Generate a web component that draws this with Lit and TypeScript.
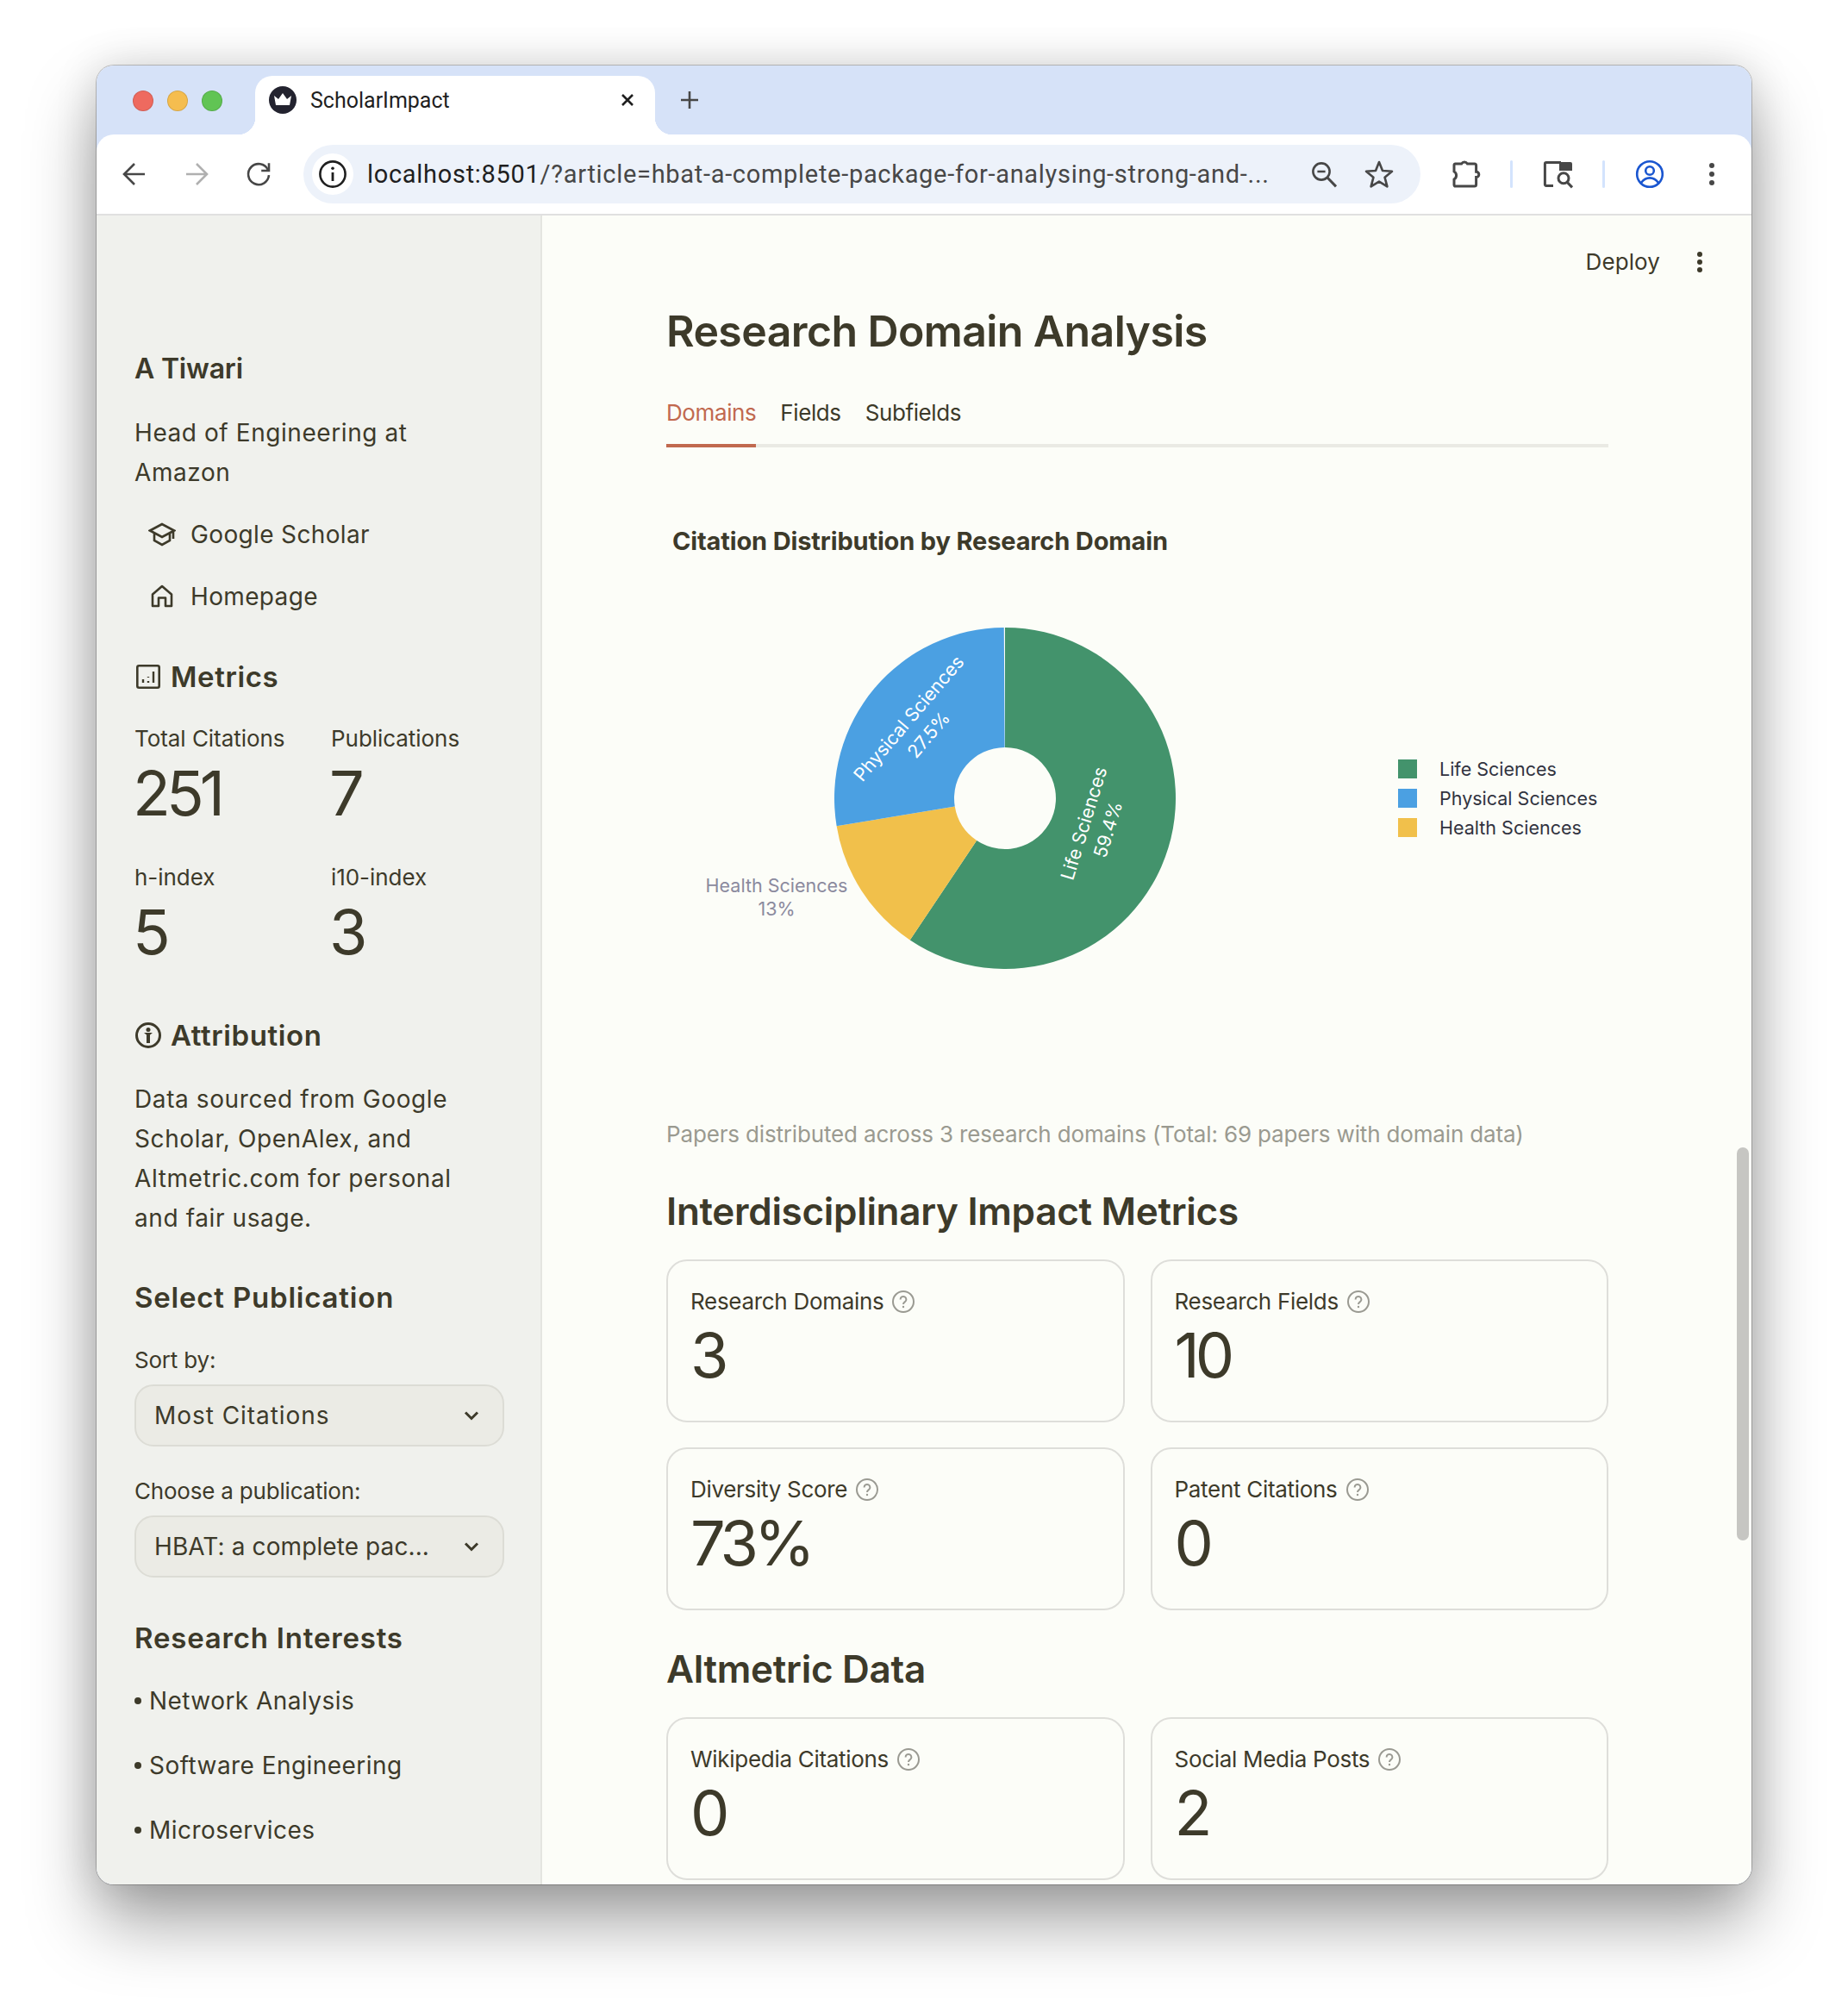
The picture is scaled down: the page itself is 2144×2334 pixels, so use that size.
import { LitElement, html, css, svg } from 'lit';
import { customElement } from 'lit/decorators.js';

const slices = [
  { name: 'Life Sciences', pct: 59.4, color: '#43936c' },
  { name: 'Physical Sciences', pct: 27.5, color: '#4ba0e2' },
  { name: 'Health Sciences', pct: 13, color: '#f1c04b' },
];
// plotly keeps the legend order but draws the pie clockwise from the top in this order
const pieOrder = [0, 2, 1];

const CX = 393;
const CY = 278;
const R = 198;
const HOLE = 59;

function point(radius: number, deg: number) {
  const a = ((deg - 90) * Math.PI) / 180;
  return `${(CX + radius * Math.cos(a)).toFixed(2)} ${(CY + radius * Math.sin(a)).toFixed(2)}`;
}

function wedge(from: number, to: number) {
  const large = to - from > 180 ? 1 : 0;
  return `M${point(HOLE, from)} L${point(R, from)} A${R} ${R} 0 ${large} 1 ${point(R, to)} L${point(HOLE, to)} A${HOLE} ${HOLE} 0 ${large} 0 ${point(HOLE, from)} Z`;
}

const help = html`<svg class="help" viewBox="0 0 26 26"><circle cx="13" cy="13" r="12" fill="none" stroke="#9a9a92" stroke-width="2"/><path d="M9.6 10.4a3.4 3.4 0 1 1 5.3 2.8c-1.2.8-1.9 1.4-1.9 2.8" fill="none" stroke="#9a9a92" stroke-width="2"/><circle cx="13" cy="19" r="1.2" fill="#9a9a92"/></svg>`;

const chevron = html`<svg class="chev" viewBox="0 0 24 24"><path d="M5 8.5l7 7 7-7" fill="none" stroke="#3d3a2a" stroke-width="3"/></svg>`;

@customElement('app-root')
export class AppRoot extends LitElement {
  static styles = css`
    :host {
      display: block;
      box-sizing: border-box;
      height: 2334px;
      padding: 76px 112px 148px;
      background: #fff;
      font-family: Inter, 'Liberation Sans', sans-serif;
      color: #3d3a2a;
    }
    * { box-sizing: border-box; }
    .window {
      position: relative;
      height: 2110px;
      border-radius: 20px;
      overflow: hidden;
      display: flex;
      flex-direction: column;
      background: #d6e2f8;
    }
    .shadow {
      height: 2110px;
      border-radius: 20px;
      box-shadow: 0 0 0 1px rgba(0,0,0,.22), 0 44px 80px rgba(0,0,0,.36), 0 0 50px rgba(0,0,0,.14);
    }
    .tabstrip { height: 80px; display: flex; align-items: flex-end; flex: none; }
    .lights { display: flex; gap: 16px; width: 184px; padding: 0 0 27px 42px; }
    .light { width: 24px; height: 24px; border-radius: 50%; border: 1px solid rgba(0,0,0,.12); }
    .red { background: #ee6a5f; }
    .amber { background: #f5bd4f; }
    .green { background: #61c454; }
    .tab {
      position: relative;
      width: 464px;
      height: 68px;
      background: #fff;
      border-radius: 20px 20px 0 0;
      display: flex;
      align-items: center;
      padding: 0 20px 12px 16px;
      font-family: Roboto, sans-serif;
      font-size: 25px;
      color: #1f1f1f;
    }
    .tab::before, .tab::after {
      content: '';
      position: absolute;
      bottom: 0;
      width: 20px;
      height: 20px;
    }
    .tab::before { left: -20px; background: radial-gradient(circle at 0 0, #d6e2f8 20px, #fff 20.5px); }
    .tab::after { right: -20px; background: radial-gradient(circle at 100% 0, #d6e2f8 20px, #fff 20.5px); }
    .favicon { width: 32px; height: 32px; margin-right: 16px; flex: none; }
    .tab-title { flex: 1; }
    .tab-close { width: 24px; height: 24px; }
    .new-tab { width: 32px; height: 32px; margin: 0 0 24px 24px; }
    .toolbar {
      height: 94px;
      flex: none;
      background: #fff;
      border-radius: 20px 20px 0 0;
      border-bottom: 2px solid #e0e0e0;
      display: flex;
      align-items: center;
      padding: 0 0 0 20px;
    }
    .ic { width: 48px; height: 48px; flex: none; display: block; }
    .nav { display: flex; gap: 24px; margin-right: 28px; }
    .omni {
      width: 1296px;
      height: 68px;
      border-radius: 34px;
      background: #edf2fa;
      display: flex;
      align-items: center;
      padding: 0 24px 0 10px;
      gap: 16px;
      margin-right: 28px;
      flex: none;
    }
    .info { border-radius: 50%; background: #fff; }
    .url {
      flex: 1;
      font-family: Roboto, sans-serif;
      font-size: 29px;
      letter-spacing: .7px;
      color: #1f1f1f;
      white-space: nowrap;
      overflow: hidden;
    }
    .url span { color: #474747; }
    .sep { width: 3px; height: 32px; background: #d3e3fd; margin: 0 28px; border-radius: 2px; flex: none; }
    .menu { margin-left: 24px; }
    .body { flex: 1; display: flex; min-height: 0; }
    .sidebar {
      width: 517px;
      flex: none;
      background: #f0f1ed;
      border-right: 2px solid #e4e5e0;
      padding: 158px 42px 0 44px;
    }
    .name { font-size: 32px; line-height: 40px; font-weight: 600; letter-spacing: -.2px; }
    .role { margin-top: 31px; font-size: 28px; line-height: 46px; letter-spacing: .57px; }
    .link { display: flex; align-items: center; margin-top: 26px; padding-left: 16px; font-size: 28px; line-height: 46px; letter-spacing: .35px; gap: 17px; }
    .link svg { width: 32px; height: 32px; flex: none; }
    .side-h {
      display: flex;
      align-items: center;
      gap: 10px;
      font-size: 33px;
      line-height: 44px;
      font-weight: 600;
      letter-spacing: .6px;
    }
    .side-h svg { width: 32px; height: 32px; flex: none; }
    .metrics-h { margin-top: 48px; }
    .metric-grid { display: grid; grid-template-columns: 228px 228px; row-gap: 38px; margin-top: 32px; }
    .m-label { font-size: 26px; line-height: 36px; letter-spacing: -.05px; }
    .m-value { font-size: 72px; line-height: 84px; margin: 3px 0 0 -2px; letter-spacing: -5px; font-weight: 400; }
    .attr-h { margin-top: 56px; }
    .para { margin-top: 29px; font-size: 28px; line-height: 46px; letter-spacing: .6px; }
    .sec-h { font-size: 33px; line-height: 44px; font-weight: 600; letter-spacing: .8px; }
    .publ-h { margin-top: 47px; }
    .f-label { font-size: 26px; line-height: 36px; margin-top: 33px; letter-spacing: -.2px; }
    .f-label.second { margin-top: 34px; }
    .select {
      height: 72px;
      margin-top: 10px;
      border: 2px solid #dcdcd5;
      border-radius: 22px;
      background: #ebebe5;
      display: flex;
      align-items: center;
      justify-content: space-between;
      padding: 0 24px 0 21px;
      font-size: 28px;
      letter-spacing: .95px;
    }
    .select.tight { letter-spacing: .1px; }
    .chev { width: 24px; height: 24px; }
    .int-h { margin-top: 48px; }
    .ints { margin-top: 28px; display: flex; flex-direction: column; gap: 29px; font-size: 28px; line-height: 46px; letter-spacing: .45px; }
    .ints div { display: flex; align-items: center; gap: 9px; }
    .ints i { width: 8px; height: 8px; border-radius: 50%; background: #3d3a2a; }
    .main { position: relative; flex: 1; background: #fcfdf8; padding: 102px 0 0 144px; overflow: hidden; }
    .topbar { position: absolute; top: 36px; right: 45px; display: flex; align-items: center; gap: 0; font-size: 26px; line-height: 36px; letter-spacing: .1px; }
    .topbar svg { width: 32px; height: 32px; margin-left: 30px; margin-right: -1px; }
    .content { width: 1093px; }
    h1 { margin: 0; font-size: 50px; line-height: 64px; font-weight: 600; letter-spacing: -.6px; }
    .tabs { margin-top: 43px; height: 60px; border-bottom: 4px solid #eaeae4; display: flex; gap: 28px; font-size: 26px; line-height: 40px; letter-spacing: -.4px; }
    .tabs div { height: 60px; }
    .tabs .on { color: #c1694f; border-bottom: 4px solid #c1694f; }
    .chart-title { margin: 89px 0 0 7px; font-size: 29px; line-height: 40px; font-weight: 700; letter-spacing: -.15px; }
    .chart { display: block; width: 1093px; height: 650px; font-family: Inter, sans-serif; }
    .lab { font-size: 21.5px; fill: #fff; text-anchor: middle; dominant-baseline: central; }
    .lab.out { fill: #8b8a9e; }
    .leg { font-size: 21.5px; fill: #31333f; dominant-baseline: central; }
    .caption { font-size: 26px; line-height: 36px; color: #9a9a90; letter-spacing: -.16px; }
    h2 { margin: 43px 0 0; font-size: 44px; line-height: 56px; font-weight: 600; letter-spacing: -.3px; }
    .cards { display: grid; grid-template-columns: 1fr 1fr; column-gap: 30px; row-gap: 29px; margin-top: 28px; }
    .card { height: 189px; border: 2px solid #dededa; border-radius: 24px; padding: 29px 26px 0; }
    .c-label { display: flex; align-items: center; gap: 10px; font-size: 26px; line-height: 36px; letter-spacing: -.3px; }
    .help { width: 26px; height: 26px; }
    .c-value { font-size: 72px; line-height: 84px; margin-top: 2px; letter-spacing: -5px; }
    .alt-h { margin-top: 40px; }
    .alt { margin-top: 28px; }
    .scroll { position: absolute; top: 1255px; left: 1903px; width: 14px; height: 456px; border-radius: 7px; background: #c6c6c2; }
  `;

  private _slices() {
    let at = 0;
    return pieOrder.map((i) => {
      const s = slices[i];
      const from = at;
      at += s.pct * 3.6;
      return svg`<path d=${wedge(from, at)} fill=${s.color}/>`;
    });
  }

  private _browser() {
    return html`
      <div class="tabstrip">
        <div class="lights">
          <div class="light red"></div><div class="light amber"></div><div class="light green"></div>
        </div>
        <div class="tab">
          <svg class="favicon" viewBox="0 0 32 32"><circle cx="16" cy="16" r="16" fill="#23232f"/><path d="M6 11l5 4 5-7 5 7 5-4-2 11H8z" fill="#fff"/></svg>
          <span class="tab-title">ScholarImpact</span>
          <svg class="tab-close" viewBox="0 0 24 24"><path d="M6 6l12 12M18 6L6 18" stroke="#1f1f1f" stroke-width="2.6"/></svg>
        </div>
        <svg class="new-tab" viewBox="0 0 32 32"><path d="M16 6v20M6 16h20" stroke="#474747" stroke-width="2.6"/></svg>
      </div>
      <div class="toolbar">
        <div class="nav">
          <svg class="ic" viewBox="0 0 24 24"><path d="M18 12H6.5M12 6l-6 6 6 6" fill="none" stroke="#474747" stroke-width="1.3"/></svg>
          <svg class="ic" viewBox="0 0 24 24"><path d="M6 12h11.5M12 6l6 6-6 6" fill="none" stroke="#b0b0b0" stroke-width="1.3"/></svg>
          <svg class="ic" viewBox="0 0 24 24"><path d="M17.4 9.4a6 6 0 1 0 .6 3.2" fill="none" stroke="#474747" stroke-width="1.3"/><path d="M18 5.6v4.4h-4.4" fill="none" stroke="#474747" stroke-width="1.3"/></svg>
        </div>
        <div class="omni">
          <svg class="ic info" viewBox="0 0 24 24"><circle cx="12" cy="12" r="7.3" fill="none" stroke="#1f1f1f" stroke-width="1.3"/><path d="M12 11v5" stroke="#1f1f1f" stroke-width="1.4"/><circle cx="12" cy="8.6" r=".9" fill="#1f1f1f"/></svg>
          <div class="url">localhost:8501<span>/?article=hbat-a-complete-package-for-analysing-strong-and-...</span></div>
          <svg class="ic" viewBox="0 0 24 24"><circle cx="10.5" cy="10.5" r="4.8" fill="none" stroke="#474747" stroke-width="1.3"/><path d="M14 14l5 5.2" stroke="#474747" stroke-width="1.5"/><path d="M8.2 10.5h4.6" stroke="#474747" stroke-width="1.3"/></svg>
          <svg class="ic" viewBox="0 0 24 24"><path d="M12 5l2 5 5.5.4-4.2 3.5 1.4 5.3L12 16.3l-4.7 2.9 1.4-5.3-4.2-3.5L10 10z" fill="none" stroke="#474747" stroke-width="1.3" stroke-linejoin="round"/></svg>
        </div>
        <svg class="ic" viewBox="0 0 24 24"><path d="M6.2 6h3.6a2 2 0 0 1 3.4 0h4.1a1 1 0 0 1 1 1v3.6a1.6 1.6 0 0 1 0 3.2V18a1 1 0 0 1-1 1H6.2a.7.7 0 0 1-.7-.7V15a2.6 2.6 0 0 0 0-4.5V6.700a.7.7 0 0 1 .7-.7z" fill="none" stroke="#474747" stroke-width="1.5"/></svg>
        <div class="sep"></div>
        <svg class="ic" viewBox="0 0 24 24"><path d="M9.5 18.7H5.5a.8.8 0 0 1-.8-.8V6a.8.8 0 0 1 .8-.8H14" fill="none" stroke="#474747" stroke-width="1.5"/><path d="M13 5h6.500a1 1 0 0 1 1 1v4H13z" fill="#474747"/><circle cx="15.5" cy="14.4" r="3" fill="none" stroke="#474747" stroke-width="1.5"/><path d="M17.6 16.7l2.9 3" stroke="#474747" stroke-width="1.5"/></svg>
        <div class="sep"></div>
        <svg class="ic" viewBox="0 0 24 24"><circle cx="12" cy="12" r="7.4" fill="none" stroke="#1a56d0" stroke-width="1.3"/><circle cx="12" cy="10" r="2.4" fill="none" stroke="#1a56d0" stroke-width="1.3"/><path d="M7 17c1.5-2 3-2.8 5-2.8s3.5.8 5 2.8" fill="none" stroke="#1a56d0" stroke-width="1.3"/></svg>
        <svg class="ic menu" viewBox="0 0 24 24"><circle cx="12" cy="7" r="1.5" fill="#474747"/><circle cx="12" cy="12" r="1.5" fill="#474747"/><circle cx="12" cy="17" r="1.5" fill="#474747"/></svg>
      </div>
    `;
  }

  private _sidebar() {
    const metrics = [
      ['Total Citations', '251'],
      ['Publications', '7'],
      ['h-index', '5'],
      ['i10-index', '3'],
    ];
    return html`
      <aside class="sidebar">
        <div class="name">A Tiwari</div>
        <div class="role">Head of Engineering at<br />Amazon</div>
        <div class="link">
          <svg viewBox="0 0 32 32"><path d="M16 4L2 11.5 16 19l14-7.5zM7 15v8l9 5 9-5v-8M29 12v9" fill="none" stroke="#3d3a2a" stroke-width="2.6"/></svg>
          Google Scholar
        </div>
        <div class="link">
          <svg viewBox="0 0 32 32"><path d="M5 27V13.5L16 4l11 9.5V27h-7V17.5h-8V27z" fill="none" stroke="#3d3a2a" stroke-width="2.6" stroke-linejoin="round"/></svg>
          Homepage
        </div>
        <div class="side-h metrics-h">
          <svg viewBox="0 0 32 32"><rect x="3.3" y="3.3" width="25.4" height="25.4" rx="2" fill="none" stroke="#3d3a2a" stroke-width="2.6"/><path d="M10 19v4M16 16v1M16 21v2M22 10v13" stroke="#3d3a2a" stroke-width="2.4"/></svg>
          Metrics
        </div>
        <div class="metric-grid">
          ${metrics.map(([l, v]) => html`<div><div class="m-label">${l}</div><div class="m-value">${v}</div></div>`)}
        </div>
        <div class="side-h attr-h">
          <svg viewBox="0 0 32 32"><circle cx="16" cy="16" r="13.5" fill="none" stroke="#3d3a2a" stroke-width="3"/><circle cx="16" cy="9.5" r="2.5" fill="#3d3a2a"/><path d="M11 13h10l-3 2.5V25h-4v-9.5z" fill="#3d3a2a"/></svg>
          Attribution
        </div>
        <div class="para">Data sourced from Google<br />Scholar, OpenAlex, and<br />Altmetric.com for personal<br />and fair usage.</div>
        <div class="sec-h publ-h">Select Publication</div>
        <div class="f-label">Sort by:</div>
        <div class="select">Most Citations ${chevron}</div>
        <div class="f-label second">Choose a publication:</div>
        <div class="select tight">HBAT: a complete pac... ${chevron}</div>
        <div class="sec-h int-h">Research Interests</div>
        <div class="ints">
          ${['Network Analysis', 'Software Engineering', 'Microservices'].map((t) => html`<div><i></i>${t}</div>`)}
        </div>
      </aside>
    `;
  }

  private _card(label: string, value: string) {
    return html`<div class="card"><div class="c-label">${label} ${help}</div><div class="c-value">${value}</div></div>`;
  }

  private _chart() {
    return html`
      <svg class="chart" viewBox="0 0 1093 650">
        ${this._slices()}
        <g transform="translate(484 307) rotate(-73)"><text class="lab">Life Sciences</text></g>
        <g transform="translate(512 314) rotate(-73)"><text class="lab">59.4%</text></g>
        <g transform="translate(281 185) rotate(-49.5)"><text class="lab">Physical Sciences</text></g>
        <g transform="translate(304 204) rotate(-49.5)"><text class="lab">27.5%</text></g>
        <text class="lab out" x="128" y="379">Health Sciences</text>
        <text class="lab out" x="128" y="406">13%</text>
        ${slices.map(
          (s, i) => svg`
            <rect x="849" y=${233 + i * 34} width="22" height="22" fill=${s.color}/>
            <text class="leg" x="897" y=${244 + i * 34}>${s.name}</text>`,
        )}
      </svg>
    `;
  }

  render() {
    return html`
      <div class="shadow">
        <div class="window">
          ${this._browser()}
          <div class="body">
            ${this._sidebar()}
            <main class="main">
              <div class="topbar">
                Deploy
                <svg viewBox="0 0 32 32"><circle cx="16" cy="7" r="3" fill="#3d3a2a"/><circle cx="16" cy="16" r="3" fill="#3d3a2a"/><circle cx="16" cy="25" r="3" fill="#3d3a2a"/></svg>
              </div>
              <div class="content">
                <h1>Research Domain Analysis</h1>
                <div class="tabs"><div class="on">Domains</div><div>Fields</div><div>Subfields</div></div>
                <div class="chart-title">Citation Distribution by Research Domain</div>
                ${this._chart()}
                <div class="caption">Papers distributed across 3 research domains (Total: 69 papers with domain data)</div>
                <h2>Interdisciplinary Impact Metrics</h2>
                <div class="cards">
                  ${this._card('Research Domains', '3')}
                  ${this._card('Research Fields', '10')}
                  ${this._card('Diversity Score', '73%')}
                  ${this._card('Patent Citations', '0')}
                </div>
                <h2 class="alt-h">Altmetric Data</h2>
                <div class="cards alt">
                  ${this._card('Wikipedia Citations', '0')}
                  ${this._card('Social Media Posts', '2')}
                </div>
              </div>
            </main>
          </div>
          <div class="scroll"></div>
        </div>
      </div>
    `;
  }
}
